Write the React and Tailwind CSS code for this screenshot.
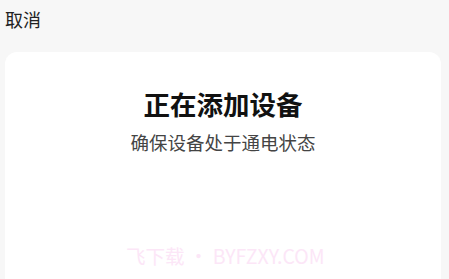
import React from 'react';

export default function App() {
  return (
    <div
      className="w-[449px] h-[279px] overflow-hidden bg-[#f7f7f7] flex flex-col"
      style={{ fontFamily: '"Noto Sans CJK SC", "Noto Sans", sans-serif' }}
    >
      <div className="h-[42px] pl-[5px] pt-[6px] text-[18px] leading-[26px] text-[#222]">取消</div>
      <div className="relative flex-1 mx-[5px] mr-[8px] mt-[10px] bg-white rounded-t-[12px] flex flex-col items-center">
        <h1 className="mt-[35px] text-[26.5px] leading-[34px] font-bold text-[#111]">正在添加设备</h1>
        <p className="mt-[9px] text-[18.5px] leading-[24px] text-[#444]">确保设备处于通电状态</p>
        <div className="absolute left-[121px] top-[192px] text-[19.5px] leading-[24px] text-[#fce6f7] whitespace-nowrap">
          飞下载 • BYFZXY.COM
        </div>
      </div>
    </div>
  );
}
